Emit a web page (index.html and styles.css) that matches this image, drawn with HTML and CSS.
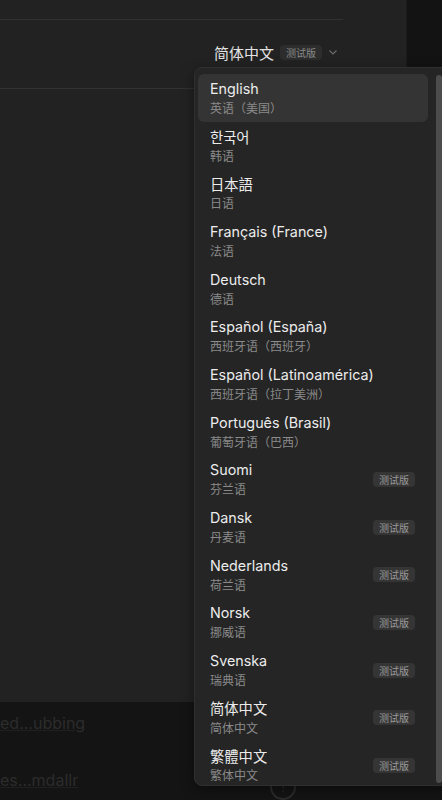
FILE: index.html
```html
<!DOCTYPE html>
<html lang="zh-CN">
<head>
  <meta charset="UTF-8" />
  <meta name="viewport" content="width=device-width, initial-scale=1.0" />
  <title>语言设置</title>
  <link rel="stylesheet" href="styles.css">
</head>
<body>
  <div class="page">
    <div class="main">
      <div class="panel">
        <div class="rule rule-top"></div>
        <div class="lang-row">
          <span class="lang-current">简体中文</span>
          <span class="badge badge-head">测试版</span>
          <svg class="chevron" width="10" height="10" viewBox="0 0 10 10">
            <path d="M1.5 3.5 L5 7 L8.5 3.5" fill="none" stroke="#6a6a6a" stroke-width="1.2" />
          </svg>
        </div>
        <div class="rule rule-mid"></div>
      </div>
      <div class="side"></div>
    </div>

    <div class="footer">
      <div class="footer-row"><span class="faded">ed...ubbing</span></div>
      <div class="footer-row">
        <span class="faded">es...mdallr</span>
        <span class="hint">
          <span class="hint-icon">!</span>
        </span>
      </div>
    </div>
  </div>

  <div class="dropdown">
    <ul class="lang-list">
      <li class="lang-item active"><span class="names"><span class="name">English</span><span class="sub">英语（美国）</span></span></li>
      <li class="lang-item"><span class="names"><span class="name ko">한국어</span><span class="sub">韩语</span></span></li>
      <li class="lang-item"><span class="names"><span class="name jp">日本語</span><span class="sub">日语</span></span></li>
      <li class="lang-item"><span class="names"><span class="name">Français (France)</span><span class="sub">法语</span></span></li>
      <li class="lang-item"><span class="names"><span class="name">Deutsch</span><span class="sub">德语</span></span></li>
      <li class="lang-item"><span class="names"><span class="name">Español (España)</span><span class="sub">西班牙语（西班牙）</span></span></li>
      <li class="lang-item"><span class="names"><span class="name">Español (Latinoamérica)</span><span class="sub">西班牙语（拉丁美洲）</span></span></li>
      <li class="lang-item"><span class="names"><span class="name">Português (Brasil)</span><span class="sub">葡萄牙语（巴西）</span></span></li>
      <li class="lang-item"><span class="names"><span class="name">Suomi</span><span class="sub">芬兰语</span></span><span class="badge">测试版</span></li>
      <li class="lang-item"><span class="names"><span class="name">Dansk</span><span class="sub">丹麦语</span></span><span class="badge">测试版</span></li>
      <li class="lang-item"><span class="names"><span class="name">Nederlands</span><span class="sub">荷兰语</span></span><span class="badge">测试版</span></li>
      <li class="lang-item"><span class="names"><span class="name">Norsk</span><span class="sub">挪威语</span></span><span class="badge">测试版</span></li>
      <li class="lang-item"><span class="names"><span class="name">Svenska</span><span class="sub">瑞典语</span></span><span class="badge">测试版</span></li>
      <li class="lang-item"><span class="names"><span class="name">简体中文</span><span class="sub">简体中文</span></span><span class="badge">测试版</span></li>
      <li class="lang-item"><span class="names"><span class="name tc">繁體中文</span><span class="sub">繁体中文</span></span><span class="badge">测试版</span></li>
    </ul>
    <div class="scrollbar"></div>
  </div>
</body>
</html>
```

FILE: styles.css
```css
* {
  box-sizing: border-box;
}

body {
  margin: 0;
  width: 442px;
  height: 800px;
  overflow: hidden;
  position: relative;
  background: #141414;
  font-family: 'Inter', 'Liberation Sans', 'Noto Sans CJK SC', sans-serif;
}

.page {
  display: flex;
  flex-direction: column;
  height: 800px;
}

.main {
  display: flex;
  height: 702px;
  flex-shrink: 0;
}

.panel {
  width: 407px;
  background: #222222;
  border-right: 1px solid #1c1c1c;
}

.side {
  flex: 1;
  background: #131313;
}

.rule {
  height: 1px;
  background: #323232;
}

.rule-top {
  width: 343px;
  margin-top: 19px;
}

.rule-mid {
  width: 200px;
  margin-top: 16px;
}

.lang-row {
  display: flex;
  align-items: center;
  height: 40px;
  margin-top: 12px;
  padding-left: 214px;
  gap: 6px;
}

.lang-current {
  font-family: 'Noto Sans CJK SC', sans-serif;
  font-size: 15px;
  color: #e2e2e2;
}

.badge {
  font-family: 'Noto Sans CJK SC', sans-serif;
  font-size: 10px;
  line-height: 15px;
  padding: 0 6px;
  border-radius: 4px;
  background: #353535;
  color: #9a9a9a;
}

.badge-head {
  background: #2d2d2d;
  color: #8a8a8a;
}

.footer {
  flex: 1;
  overflow: hidden;
  padding-top: 7px;
}

.footer-row {
  display: flex;
  align-items: center;
  height: 28px;
  margin-bottom: 29px;
}

.faded {
  font-size: 16px;
  color: #2c2c2c;
  text-decoration: underline;
  text-decoration-color: #202020;
}

.hint {
  display: flex;
  align-items: center;
  margin-left: 192px;
  margin-top: 14px;
}

.hint-icon {
  width: 26px;
  height: 26px;
  border: 2px solid #2c2c2c;
  border-radius: 50%;
  color: #2c2c2c;
  font-size: 13px;
  display: flex;
  align-items: center;
  justify-content: center;
}

/* dropdown overlay */
.dropdown {
  position: absolute;
  left: 194px;
  top: 67px;
  width: 256px;
  height: 719px;
  background: #252525;
  border: 1px solid #2f2f2f;
  border-radius: 8px;
  box-shadow: 0 4px 14px rgba(0, 0, 0, 0.4);
  display: flex;
  padding: 6px 0 0 3px;
}

.lang-list {
  list-style: none;
  margin: 0;
  padding: 0;
  width: 230px;
}

.lang-item {
  height: 47.7px;
  display: flex;
  align-items: center;
  padding: 0 13px 0 12px;
  border-radius: 6px;
}

.lang-item.active {
  background: #343434;
}

.names {
  display: flex;
  flex-direction: column;
  gap: 2px;
}

.name {
  font-size: 14.3px;
  line-height: 18px;
  color: #ececec;
}

.name.ko {
  font-family: 'Noto Sans CJK KR', sans-serif;
}

.name.jp {
  font-family: 'Noto Sans CJK JP', sans-serif;
}

.name.tc {
  font-family: 'Noto Sans CJK TC', sans-serif;
}

.sub {
  font-family: 'Noto Sans CJK SC', sans-serif;
  font-size: 12px;
  line-height: 16px;
  color: #8a8a8a;
}

.lang-item .badge {
  margin-left: auto;
}

.scrollbar {
  width: 6px;
  margin: 1px 0 0 8px;
  height: 708px;
  border-radius: 3px;
  background: #4c4c4c;
}
```
